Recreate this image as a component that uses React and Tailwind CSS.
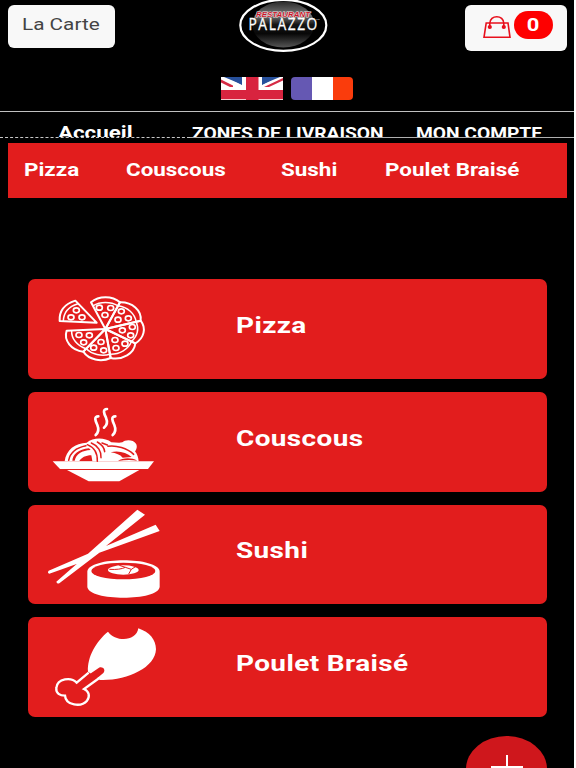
import React from "react";

const slices = [
  [213, 97, 300, 97],
  [300, 97, 362, 152],
  [362, 152, 346, 220],
  [346, 220, 272, 264],
  [272, 264, 190, 245],
  [190, 245, 140, 182],
];

const toppings = [
  [238, 113], [272, 114], [255, 135], [304, 124], [325, 145], [294, 149],
  [337, 171], [307, 181], [332, 196], [285, 210], [315, 221], [288, 234],
  [243, 216], [221, 233], [251, 241], [177, 195], [208, 196], [191, 217],
  [169, 121], [153, 142], [186, 142],
];

function PizzaIcon() {
  const cx = 256;
  const cy = 177;
  const inner = (v, c) => c + (v - c) * 0.87;
  return (
    <svg viewBox="24 27 456 300" className="h-[100px] w-[152px]" fill="none" stroke="#fff" strokeWidth="6" strokeLinejoin="round">
      {slices.map(([a, b, c, d], i) => (
        <g key={i}>
          <path d={`M${cx} ${cy}L${a} ${b}A60 50 0 0 1 ${c} ${d}Z`} />
          <path strokeWidth="4.5" d={`M${inner(a, cx)} ${inner(b, cy)}A66 55 0 0 1 ${inner(c, cx)} ${inner(d, cy)}`} />
        </g>
      ))}
      <path d="M230 158L119 153Q116 108 166 92Z" />
      <path strokeWidth="4.5" d="M130 153Q131 114 174 101" />
      {toppings.map(([x, y], i) => (
        <ellipse key={i} cx={x} cy={y} rx="9" ry="7.5" strokeWidth="5" />
      ))}
    </svg>
  );
}

function CouscousIcon() {
  return (
    <svg viewBox="24 21 456 300" className="h-[100px] w-[152px]" fill="#fff">
      <path d="M98 229H402L384 252H120Z" />
      <path d="M141 255H358L298 289H206Z" />
      <path d="M134 229C138 194 166 174 200 173C220 157 254 157 274 172C286 172 298 174 307 172C315 163 340 163 348 176C353 185 349 194 345 199C352 208 355 218 356 229Z" />
      <g fill="none" stroke="#e21d1d" strokeWidth="4.5" strokeLinecap="round">
        <path d="M146 226C150 204 168 188 198 182" />
        <path d="M202 179C222 187 233 204 232 229" />
        <path d="M214 174C234 182 245 200 243 218" />
        <path d="M232 171C246 179 253 189 254 200" />
        <path d="M264 184C288 180 322 190 341 208" />
        <path d="M246 174L262 180" />
      </g>
      <path fill="#e21d1d" d="M157 227C158 210 175 192 207 190L212 195C186 196 168 208 164 227ZM178 228C184 218 197 211 214 211L217 228ZM272 202C296 196 320 203 335 216L308 218C300 209 289 205 272 202ZM294 228C308 218 334 217 352 227Q326 222 294 228Z" />
      <g fill="none" stroke="#fff" strokeWidth="8" strokeLinecap="round">
        <path d="M235 94C221 94 226 108 232 120C237 132 236 142 227 150" />
        <path d="M261 72C247 72 252 86 258 98C263 110 262 120 252 128" />
        <path d="M286 94C272 94 277 108 283 120C288 132 287 142 278 150" />
      </g>
    </svg>
  );
}

function SushiIcon() {
  return (
    <svg viewBox="24 20 456 300" className="h-[100px] w-[152px]" fill="#fff">
      <path d="M352 37L375 52L258 146L407 82L419 101L238 166L118 258Q111 261 109 253L170 200L88 229Q81 226 86 220L204 169Z" />
      <path d="M202 223C203 177 418 177 419 223V268C417 312 204 312 202 268Z" />
      <ellipse cx="310" cy="221" rx="96" ry="25" fill="#e21d1d" />
      <ellipse cx="310" cy="218" rx="46" ry="14" />
      <path d="M268 216Q300 218 316 210L298 204M316 210L334 216L326 230M334 216L348 207" fill="none" stroke="#e21d1d" strokeWidth="3" />
    </svg>
  );
}

function ChickenIcon() {
  return (
    <svg viewBox="24 16 456 300" className="h-[100px] w-[152px]">
      <path fill="#fff" d="M264 60C286 91 349 91 355 50C389 62 408 84 408 113C406 169 319 208 240 205L204 180C201 136 229 88 264 60Z" />
      <path
        d="M237 168L170 214C156 196 112 199 109 229C107 245 120 252 135 252C137 282 184 287 201 267C211 253 207 239 192 232L250 184C259 173 247 163 237 168Z"
        fill="#e21d1d"
      />
      <path d="M206 183L170 213C154 196 112 199 109 229C107 245 120 252 135 252C137 282 184 287 201 267C211 253 207 239 192 232L238 199" fill="none" stroke="#fff" strokeWidth="7" />
    </svg>
  );
}

function Logo() {
  return (
    <svg viewBox="0 0 90 54" className="h-[54px] w-[90px]">
      <defs>
        <linearGradient id="gloss" x1="0" y1="0" x2="0" y2="1">
          <stop offset="0" stopColor="#2a2a2a" />
          <stop offset="0.3" stopColor="#777" />
          <stop offset="0.5" stopColor="#151515" />
          <stop offset="0.7" stopColor="#080808" />
          <stop offset="1" stopColor="#555" />
        </linearGradient>
      </defs>
      <ellipse cx="45.3" cy="25.3" rx="43" ry="25.5" fill="#000" stroke="#fff" strokeWidth="2.2" />
      <ellipse cx="45.3" cy="24.5" rx="31" ry="23" fill="url(#gloss)" />
      <text x="18" y="16.8" textLength="54" lengthAdjust="spacingAndGlyphs" fontFamily="Liberation Sans, sans-serif" fontSize="6.4" fontWeight="bold" fontStyle="italic" fill="#c8152b" stroke="#f0e0e2" strokeWidth="0.9" paintOrder="stroke">RESTAURANT</text>
      <text transform="translate(10.5 30) scale(0.86 1)" textLength="80" fontFamily="Open Sans, sans-serif" fontSize="16" fill="#fff" stroke="#fff" strokeWidth="0.3">PALAZZO</text>
      <text x="78" y="20" fontFamily="Roboto, sans-serif" fontSize="2.5" fill="#ccc">TM</text>
    </svg>
  );
}

function UkFlag() {
  return (
    <svg viewBox="0 0 62 23" preserveAspectRatio="none" className="h-[23px] w-[62px]">
      <rect width="62" height="23" fill="#27509b" />
      <path d="M0 0V11H21V8L6 0ZM62 0V11H41V8L56 0Z" fill="#fff" />
      <path d="M3 0H21V7.5ZM59 0H41V7.5Z" fill="#27509b" />
      <path d="M0 2.5L12 8.5V10L9 10L0 5.5ZM62 3.5L48 10H43L62 1Z" fill="#d52b45" />
      <path d="M21 0H41V23H21ZM0 10H62V23H0Z" fill="#fff" />
      <path d="M25 0H37.500V23H25ZM0 13H62V22.300H0Z" fill="#d8243f" />
    </svg>
  );
}

function BagIcon() {
  return (
    <svg viewBox="0 0 28 24" className="h-6 w-7" fill="none" stroke="#e8101c" strokeWidth="1.6">
      <path d="M3.2 8H25L27 22.3H1Z" />
      <path d="M6.800 12V8.500C6.800-.5 20.800-.5 20.800 8.500V12" />
      <circle cx="6.8" cy="12" r="1.3" fill="#e8101c" />
      <circle cx="20.8" cy="12" r="1.3" fill="#e8101c" />
    </svg>
  );
}

const cards = [
  { title: "Pizza", Icon: PizzaIcon },
  { title: "Couscous", Icon: CouscousIcon },
  { title: "Sushi", Icon: SushiIcon },
  { title: "Poulet Braisé", Icon: ChickenIcon },
];

export default function App() {
  return (
    <div className="h-[768px] w-[576px] overflow-hidden bg-white font-['Roboto',sans-serif] text-white">
      <div className="relative h-full w-[574px] overflow-hidden bg-black">
        <header className="flex h-[111px] items-start">
          <button className="mt-[5px] ml-2 h-[43px] w-[107px] shrink-0 rounded-md bg-[#f8f8f8] pb-[3px] pl-[14px] text-left text-[#444]">
            <span className="inline-block origin-left scale-x-[1.22] text-[17px] whitespace-nowrap">La Carte</span>
          </button>
          <div className="ml-[105px] flex w-[134px] shrink-0 flex-col items-center">
            <div className="-ml-[9px] flex"><Logo /></div>
            <div className="mt-[23px] flex gap-2">
              <UkFlag />
              <div className="flex h-[23px] w-[62px] overflow-hidden rounded-sm">
                <div className="w-[21px] bg-[#6558b3]" />
                <div className="w-[21px] bg-white" />
                <div className="w-5 bg-[#fa3c0c]" />
              </div>
            </div>
          </div>
          <button className="mt-[5px] ml-[111px] flex h-[46px] w-[102px] shrink-0 items-start rounded-md bg-[#f8f8f8] pt-[6px] pl-[18px]">
            <span className="mt-[4px]"><BagIcon /></span>
            <span className="ml-[3px] flex h-7 w-[39px] items-center justify-center rounded-[14px] bg-[#fe0000]">
              <span className="scale-x-[1.22] text-[18px] leading-none font-bold">0</span>
            </span>
          </button>
        </header>
        <nav className="flex h-[26px] overflow-hidden border-t border-t-[#c0c0c0] font-bold whitespace-nowrap">
          <div className="w-[133px] shrink-0 pt-[9px] pl-[58px]">
            <span className="inline-block origin-left scale-x-[1.24] text-[18px] leading-6">Accueil</span>
          </div>
          <div className="w-[225px] shrink-0 pt-[10px] pl-[58.5px]">
            <span className="inline-block origin-left scale-x-[1.2] text-[16px] leading-6">ZONES DE LIVRAISON</span>
          </div>
          <div className="pt-[10px] pl-[58px]">
            <span className="inline-block origin-left scale-x-[1.2] text-[16px] leading-6">MON COMPTE</span>
          </div>
        </nav>
        <div className="flex h-px">
          <div className="w-[190px] border-t border-dashed border-[#c8c8c8]" />
          <div className="flex-1 bg-[#b0b0b0]" />
        </div>
        <nav className="mt-[5px] ml-2 flex h-[55px] w-[559px] bg-[#e21d1d] pt-[15px] pl-[15.5px] text-[18px] leading-6 font-bold whitespace-nowrap">
          <div className="w-[102px]"><span className="inline-block origin-left scale-x-[1.245]">Pizza</span></div>
          <div className="w-[155px]"><span className="inline-block origin-left scale-x-[1.245]">Couscous</span></div>
          <div className="w-[104px]"><span className="inline-block origin-left scale-x-[1.245]">Sushi</span></div>
          <div><span className="inline-block origin-left scale-x-[1.245]">Poulet Braisé</span></div>
        </nav>
        <main className="mt-[81px] ml-[28px] flex w-[518.5px] flex-col gap-[13px]">
          {cards.map(({ title, Icon }) => (
            <section key={title} className="flex h-[99.75px] items-center rounded-[7px] bg-[#e21d1d]">
              <Icon />
              <h2 className="mb-[7px] ml-[55.5px] origin-left scale-x-[1.27] text-[22px] font-bold tracking-[0.3px] whitespace-nowrap">{title}</h2>
            </section>
          ))}
        </main>
        <button className="absolute top-[736px] left-[466px] flex h-[66px] w-[81px] justify-center rounded-[50%] bg-[#cf171c]">
          <svg viewBox="0 0 32 26" className="mt-[19px] h-[26px] w-8" stroke="#fff" strokeWidth="2">
            <path d="M16 0V26M0 12H32" />
          </svg>
        </button>
      </div>
    </div>
  );
}
